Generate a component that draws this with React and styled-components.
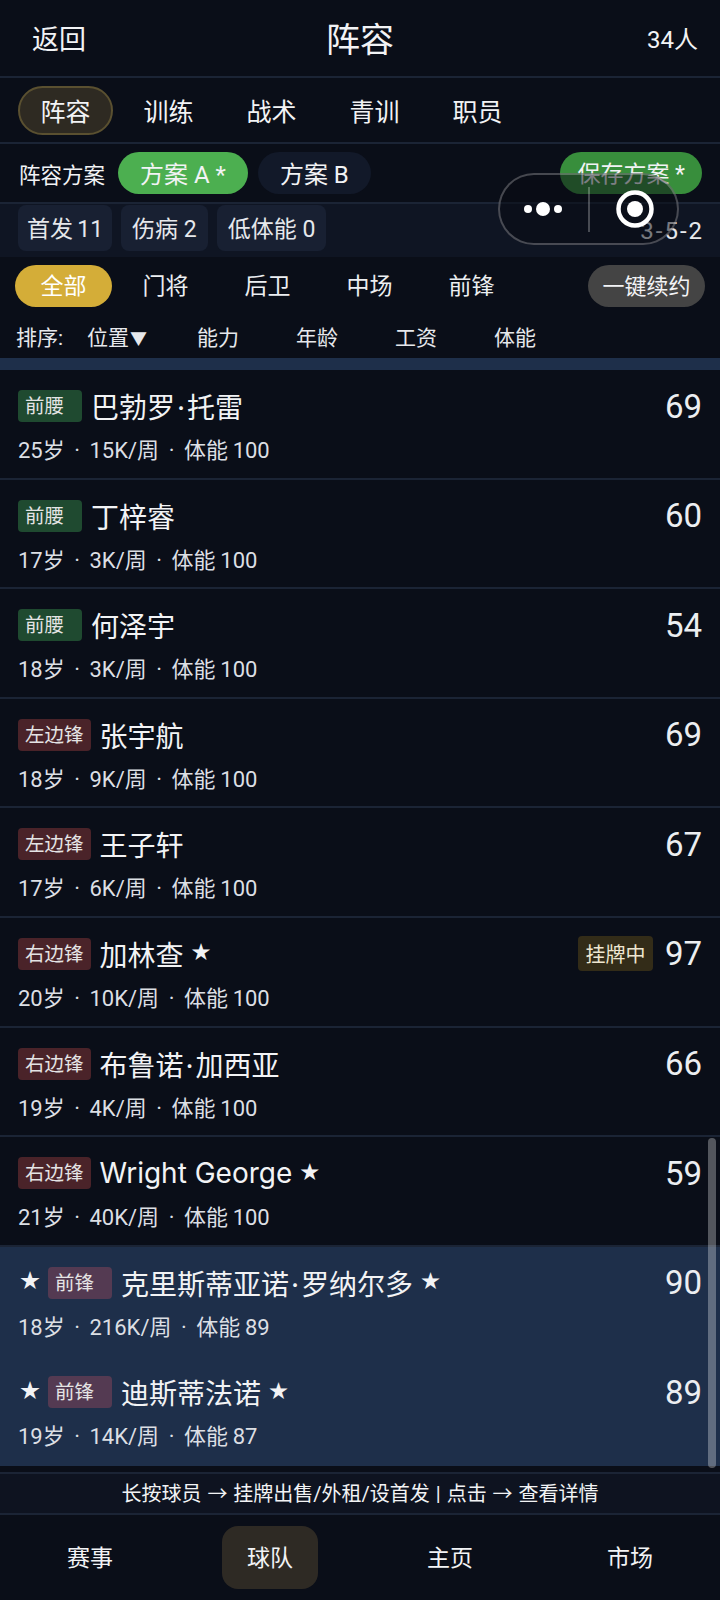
import React from 'react'
import styled, { createGlobalStyle } from 'styled-components'

const Global = createGlobalStyle`
html, body { margin: 0; padding: 0; background: #0a0e18; }
* { box-sizing: border-box; }
`

const Page = styled.div`
position: relative;
width: 720px;
height: 1600px;
overflow: hidden;
display: flex;
flex-direction: column;
background: #0a0e18;
color: #f2f3f5;
font-family: Roboto, "Noto Sans CJK SC", sans-serif;
`

const Header = styled.header`
height: 78px;
flex: none;
display: grid;
grid-template-columns: 1fr auto 1fr;
align-items: center;
padding: 0 22px 2px 32px;
border-bottom: 2px solid #1b2435;
`

const Back = styled.span`font-size: 27px;`
const Title = styled.h1`margin: 0 0 0 -10px; font-size: 34px; font-weight: 400;`
const Count = styled.span`font-size: 24px; text-align: right;`

const Tabs = styled.nav`
height: 66px;
flex: none;
display: flex;
align-items: center;
gap: 8px;
padding-left: 18px;
border-bottom: 2px solid #1b2435;
`

const Tab = styled.span`
width: 95px;
height: 49px;
display: flex;
align-items: center;
justify-content: center;
font-size: 25px;
border-radius: 25px;
border: 2px solid ${p => (p.$active ? '#5a5030' : 'transparent')};
background: ${p => (p.$active ? '#2e2a22' : 'transparent')};
`

const PlanRow = styled.div`
height: 60px;
flex: none;
display: flex;
align-items: center;
padding: 0 18px 0 19px;
border-bottom: 2px solid #1b2435;
`

const PlanLabel = styled.span`font-size: 21.5px; margin-right: 13px;`

const PlanPill = styled.span`
height: 42px;
padding: 0 22px 2px;
margin-right: 10px;
display: flex;
align-items: center;
font-size: 24px;
border-radius: 21px;
background: ${p => (p.$active ? '#4caf50' : '#121929')};
`

const SaveButton = styled.span`
height: 42px;
padding: 0 17px 2px;
margin-left: auto;
display: flex;
align-items: center;
font-size: 23px;
border-radius: 21px;
background: #388e3c;
`

const StatRow = styled.div`
height: 53px;
flex: none;
display: flex;
align-items: flex-start;
gap: 9px;
padding: 1px 18px 0;
background: #0f1523;
`

const Chip = styled.span`
height: 46px;
padding: 0 ${p => (p.$narrow ? '9px' : '11px')} 2px;
display: flex;
align-items: center;
font-size: 23px;
border-radius: 8px;
background: #182032;
color: #e6e8ec;
word-spacing: ${p => (p.$narrow ? '-1.5px' : '0')};
`

const Formation = styled.span`
margin: 0 -2px 0 auto;
align-self: center;
font-size: 24px;
letter-spacing: 2px;
color: #e6e8ec;
`

const FilterRow = styled.div`
height: 57px;
flex: none;
display: flex;
align-items: center;
gap: 5px;
padding: 0 15px;
`

const Filter = styled.span`
width: 97px;
height: 42px;
padding-bottom: 3px;
display: flex;
align-items: center;
justify-content: center;
font-size: 23px;
border-radius: 21px;
color: ${p => (p.$active ? '#fff' : '#eceef1')};
background: ${p => (p.$active ? '#d4ad38' : 'transparent')};
`

const Renew = styled.span`
margin-left: auto;
width: 117px;
height: 42px;
padding-bottom: 3px;
display: flex;
align-items: center;
justify-content: center;
font-size: 22px;
border-radius: 21px;
background: #444;
`

const SortRow = styled.div`
height: 44px;
flex: none;
display: flex;
align-items: center;
padding-left: 16px;
font-size: 21px;
color: #e6e8ec;
`

const SortLabel = styled.span`width: 71px;`
const SortItem = styled.span`width: ${p => (p.$wide ? '110px' : '99px')};`
const Arrow = styled.span`font-size: 17px; margin-left: 1px;`

const Strip = styled.div`
height: 12px;
flex: none;
background: #1e2f4a;
`

const List = styled.div`
flex: none;
height: 1096px;
`

const Row = styled.div`
height: ${p => (p.$hot ? '109.7px' : '109.6px')};
padding: 20px 18px 0;
background: ${p => (p.$hot ? '#1e2f4a' : 'transparent')};
border-bottom: 2px solid ${p => (p.$hot ? '#1e2f4a' : '#1b2435')};
display: flex;
flex-direction: column;
gap: 10px;
`

const RowTop = styled.div`
height: 32px;
display: flex;
align-items: center;
`

const Lead = styled.span`
width: 30px;
font-size: 20px;
padding-left: 2px;
margin-bottom: 6px;
`

const Tag = styled.span`
min-width: 64px;
height: 32px;
padding: 0 7px 3px;
display: flex;
align-items: center;
font-size: 19.5px;
border-radius: 4px;
margin-right: 9px;
color: #e4e4e4;
background: ${p => p.$tone};
`

const Name = styled.span`
font-family: Inter, "Noto Sans CJK SC", sans-serif;
font-size: 28px;
white-space: nowrap;
`

const NameDot = styled.span`margin: 0 2px;`

const Star = styled.span`
font-size: 19px;
margin: 0 0 6px 8px;
`

const Listed = styled.span`
margin-left: auto;
height: 35px;
width: 75px;
display: flex;
align-items: center;
justify-content: center;
font-size: 20px;
border-radius: 4px;
background: #332c18;
color: #eee6d0;
`

const Rating = styled.span`
margin-left: ${p => (p.$afterTag ? '12px' : 'auto')};
font-size: 33px;
color: #eceef1;
`

const Sub = styled.div`
font-size: 22px;
color: #dcdfe4;
white-space: pre;
word-spacing: -0.7px;
`

const Hint = styled.div`
height: 43px;
flex: none;
display: flex;
align-items: center;
justify-content: center;
padding-bottom: 3px;
font-size: 20px;
word-spacing: 1px;
margin-top: 6px;
background: #0e1320;
border-top: 2px solid #1b2435;
border-bottom: 2px solid #1b2435;
`

const BottomNav = styled.nav`
flex: 1;
display: grid;
grid-template-columns: repeat(4, 1fr);
align-items: center;
justify-items: center;
`

const NavItem = styled.span`
width: 96px;
height: 63px;
padding-bottom: 3px;
display: flex;
align-items: center;
justify-content: center;
font-size: 23px;
border-radius: 16px;
background: ${p => (p.$active ? '#2e2a24' : 'transparent')};
`

const ScrollThumb = styled.div`
position: absolute;
left: 708px;
top: 1138px;
width: 8px;
height: 330px;
border-radius: 4px;
background: rgba(255, 255, 255, 0.3);
`

const Capsule = styled.div`
position: absolute;
left: 498px;
top: 173px;
width: 181px;
height: 72px;
border-radius: 36px;
border: 2px solid rgba(255, 255, 255, 0.25);
background: rgba(8, 10, 18, 0.5);
`

const CapsuleIcon = styled.svg`
display: block;
position: absolute;
left: -2px;
top: -2px;
`

const green = '#1f4a30'
const red = '#4a2329'
const hotTag = '#543a52'

const players = [
  { pos: '前腰', tone: green, name: '巴勃罗·托雷', sub: '25岁  ·  15K/周  ·  体能 100', rating: 69 },
  { pos: '前腰', tone: green, name: '丁梓睿', sub: '17岁  ·  3K/周  ·  体能 100', rating: 60 },
  { pos: '前腰', tone: green, name: '何泽宇', sub: '18岁  ·  3K/周  ·  体能 100', rating: 54 },
  { pos: '左边锋', tone: red, name: '张宇航', sub: '18岁  ·  9K/周  ·  体能 100', rating: 69 },
  { pos: '左边锋', tone: red, name: '王子轩', sub: '17岁  ·  6K/周  ·  体能 100', rating: 67 },
  { pos: '右边锋', tone: red, name: '加林查', star: true, listed: true, sub: '20岁  ·  10K/周  ·  体能 100', rating: 97 },
  { pos: '右边锋', tone: red, name: '布鲁诺·加西亚', sub: '19岁  ·  4K/周  ·  体能 100', rating: 66 },
  { pos: '右边锋', tone: red, name: 'Wright George', star: true, sub: '21岁  ·  40K/周  ·  体能 100', rating: 59 },
  { pos: '前锋', tone: hotTag, hot: true, name: '克里斯蒂亚诺·罗纳尔多', star: true, sub: '18岁  ·  216K/周  ·  体能 89', rating: 90 },
  { pos: '前锋', tone: hotTag, hot: true, name: '迪斯蒂法诺', star: true, sub: '19岁  ·  14K/周  ·  体能 87', rating: 89 },
]

function PlayerName({ text }) {
  const parts = text.split('·')
  if (parts.length === 1) return <Name>{text}</Name>
  return (
    <Name>
      {parts[0]}
      <NameDot>·</NameDot>
      {parts[1]}
    </Name>
  )
}

function PlayerRow({ p }) {
  return (
    <Row $hot={p.hot}>
      <RowTop>
        {p.hot && <Lead>★</Lead>}
        <Tag $tone={p.tone}>{p.pos}</Tag>
        <PlayerName text={p.name} />
        {p.star && <Star>★</Star>}
        {p.listed && <Listed>挂牌中</Listed>}
        <Rating $afterTag={p.listed}>{p.rating}</Rating>
      </RowTop>
      <Sub>{p.sub}</Sub>
    </Row>
  )
}

export default function App() {
  return (
    <Page>
      <Global />
      <Header>
        <Back>返回</Back>
        <Title>阵容</Title>
        <Count>34人</Count>
      </Header>
      <Tabs>
        <Tab $active>阵容</Tab>
        <Tab>训练</Tab>
        <Tab>战术</Tab>
        <Tab>青训</Tab>
        <Tab>职员</Tab>
      </Tabs>
      <PlanRow>
        <PlanLabel>阵容方案</PlanLabel>
        <PlanPill $active>方案 A *</PlanPill>
        <PlanPill>方案 B</PlanPill>
        <SaveButton>保存方案 *</SaveButton>
      </PlanRow>
      <StatRow>
        <Chip $narrow>首发 11</Chip>
        <Chip>伤病 2</Chip>
        <Chip>低体能 0</Chip>
        <Formation>3-5-2</Formation>
      </StatRow>
      <FilterRow>
        <Filter $active>全部</Filter>
        <Filter>门将</Filter>
        <Filter>后卫</Filter>
        <Filter>中场</Filter>
        <Filter>前锋</Filter>
        <Renew>一键续约</Renew>
      </FilterRow>
      <SortRow>
        <SortLabel>排序:</SortLabel>
        <SortItem $wide>
          位置<Arrow>▼</Arrow>
        </SortItem>
        <SortItem>能力</SortItem>
        <SortItem>年龄</SortItem>
        <SortItem>工资</SortItem>
        <SortItem>体能</SortItem>
      </SortRow>
      <Strip />
      <List>
        {players.map(p => (
          <PlayerRow key={p.name} p={p} />
        ))}
      </List>
      <Hint>长按球员 → 挂牌出售/外租/设首发 | 点击 → 查看详情</Hint>
      <BottomNav>
        <NavItem>赛事</NavItem>
        <NavItem $active>球队</NavItem>
        <NavItem>主页</NavItem>
        <NavItem>市场</NavItem>
      </BottomNav>
      <ScrollThumb />
      <Capsule>
        <CapsuleIcon width="181" height="72" viewBox="0 0 181 72">
          <circle cx="30" cy="36" r="4" fill="#fff" />
          <circle cx="45" cy="36" r="7" fill="#fff" />
          <circle cx="60" cy="36" r="4" fill="#fff" />
          <line x1="91" y1="14" x2="91" y2="59" stroke="rgba(255,255,255,0.25)" strokeWidth="2" />
          <circle cx="137" cy="36" r="16.5" fill="none" stroke="#fff" strokeWidth="4.5" />
          <circle cx="137" cy="36" r="8" fill="#fff" />
        </CapsuleIcon>
      </Capsule>
    </Page>
  )
}
